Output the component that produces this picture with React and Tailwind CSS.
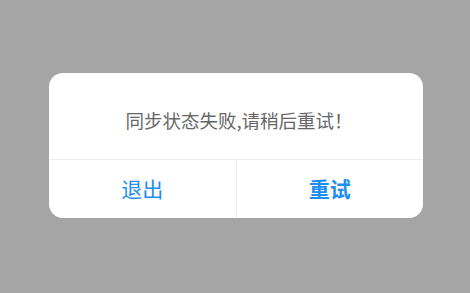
import React from "react";

const App = () => {
  return (
    <div
      className="w-full h-[293px] bg-[#a5a5a5] flex justify-center pt-[73px] pl-[2px]"
      style={{ fontFamily: '"Noto Sans CJK SC", "Noto Sans", sans-serif' }}
    >
      <div className="w-[374px] h-[145px] bg-white rounded-[14px] flex flex-col overflow-hidden">
        <div className="h-[86px] flex items-center justify-center pt-[7px] pl-[6px] text-[18.5px] leading-[24px] text-[#666666]">
          同步状态失败,请稍后重试！
        </div>
        <div className="flex flex-1 border-t border-[#ededed]">
          <button className="flex-1 flex items-center justify-center text-[21px] text-[#1e8ff0]">
            退出
          </button>
          <div className="w-px bg-[#ededed]"></div>
          <button className="flex-1 flex items-center justify-center text-[21px] font-bold text-[#1e8ff0]">
            重试
          </button>
        </div>
      </div>
    </div>
  );
};

export default App;
